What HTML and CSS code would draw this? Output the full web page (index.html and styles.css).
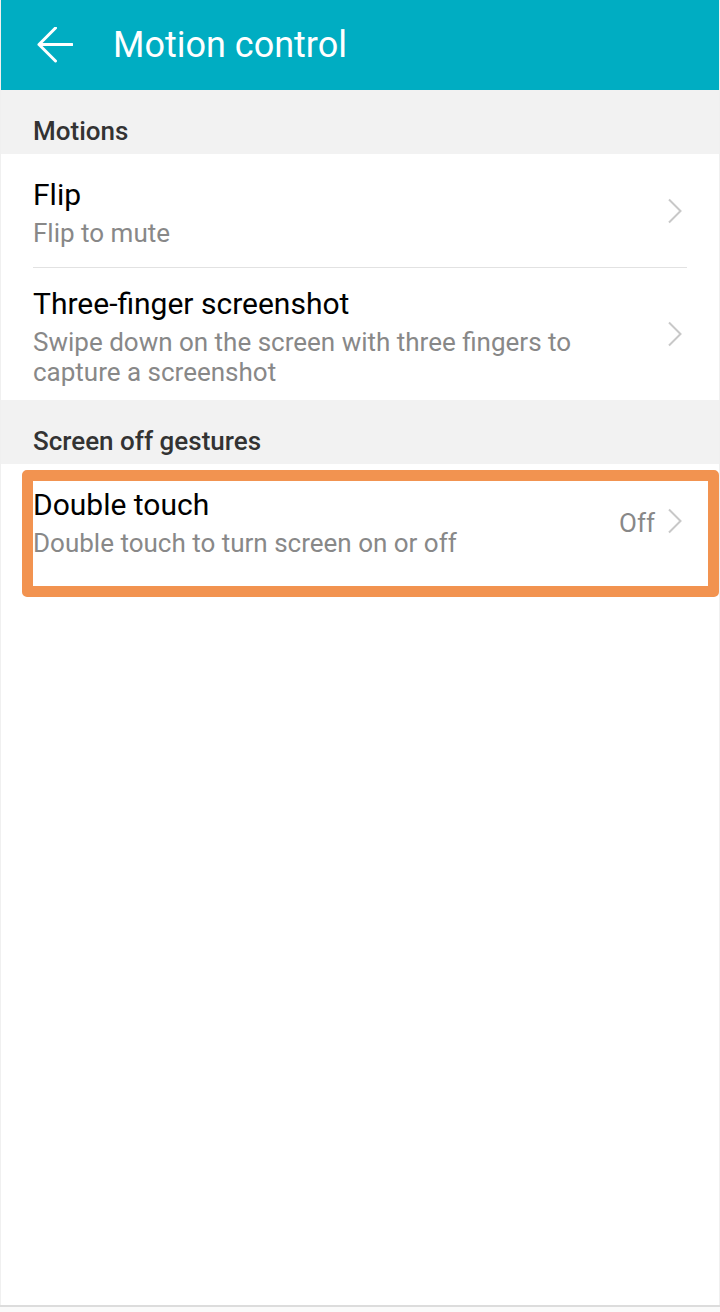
FILE: index.html
```html
<!DOCTYPE html>
<html lang="en">
  <head>
    <meta charset="UTF-8" />
    <meta name="viewport" content="width=device-width, initial-scale=1.0" />
    <title>Motion control</title>
    <link rel="stylesheet" href="styles.css">
  </head>
  <body>
    <div class="screen">
      <header class="toolbar">
        <svg class="back" width="36" height="36" viewBox="0 0 36 36">
          <path d="M35 17.5H2M18.5 1L2 17.5L18.5 34" fill="none" stroke="#fff" stroke-width="3" stroke-linecap="round" stroke-linejoin="round" />
        </svg>
        <h1>Motion control</h1>
      </header>

      <div class="section">Motions</div>
      <div class="row row-short">
        <div class="text">
          <div class="title">Flip</div>
          <div class="summary">Flip to mute</div>
        </div>
        <svg class="chevron" width="16" height="26" viewBox="0 0 16 26">
          <path d="M2 1.5L13.5 13L2 24.5" fill="none" stroke="#c8c8c8" stroke-width="2" />
        </svg>
      </div>
      <div class="divider"></div>
      <div class="row">
        <div class="text">
          <div class="title">Three-finger screenshot</div>
          <div class="summary">Swipe down on the screen with three fingers to capture a screenshot</div>
        </div>
        <svg class="chevron" width="16" height="26" viewBox="0 0 16 26">
          <path d="M2 1.5L13.5 13L2 24.5" fill="none" stroke="#c8c8c8" stroke-width="2" />
        </svg>
      </div>

      <div class="section">Screen off gestures</div>
      <div class="row row-short">
        <div class="text">
          <div class="title">Double touch</div>
          <div class="summary">Double touch to turn screen on or off</div>
        </div>
        <span class="value">Off</span>
        <svg class="chevron" width="16" height="26" viewBox="0 0 16 26">
          <path d="M2 1.5L13.5 13L2 24.5" fill="none" stroke="#c8c8c8" stroke-width="2" />
        </svg>
        <div class="mark"></div>
      </div>
    </div>
    <div class="navbar"></div>
  </body>
</html>
```

FILE: styles.css
```css
body {
  margin: 0;
  font-family: Roboto, "Noto Sans", sans-serif;
  background: #fafafa;
}
.screen {
  height: 1305px;
  background: white;
  border-left: 1px solid #f0f0f0;
  border-right: 1px solid #f0f0f0;
  box-sizing: border-box;
}
.navbar {
  height: 2px;
  background: #dcdcdc;
}
.toolbar {
  height: 90px;
  background: #00adc2;
  display: flex;
  align-items: center;
  padding-left: 36px;
}
.toolbar h1 {
  margin: 0 0 0 40px;
  font-size: 36px;
  font-weight: 400;
  color: #fff;
}
.section {
  background: #f2f2f2;
  height: 64px;
  box-sizing: border-box;
  padding: 25px 0 0 32px;
  font-size: 26px;
  line-height: 32px;
  font-weight: 500;
  color: #333;
}
.row {
  position: relative;
  display: flex;
  align-items: center;
  min-height: 132px;
  padding: 4px 36px 0 32px;
  box-sizing: border-box;
}
.row-short {
  min-height: 113px;
}
.text {
  flex: 1;
  padding-right: 60px;
}
.title {
  font-size: 30px;
  line-height: 36px;
  color: #000;
}
.summary {
  margin-top: 5px;
  font-size: 26px;
  line-height: 30px;
  color: #888;
}
.value {
  font-size: 26px;
  color: #888;
  margin-right: 12px;
}
.chevron {
  margin-top: -4px;
}
.divider {
  height: 1px;
  background: #e2e2e2;
  margin: 0 32px;
}
.mark {
  position: absolute;
  left: 21px;
  right: 0;
  top: 6px;
  bottom: -20px;
  border: 11px solid #f29350;
  border-radius: 5px;
}
```
